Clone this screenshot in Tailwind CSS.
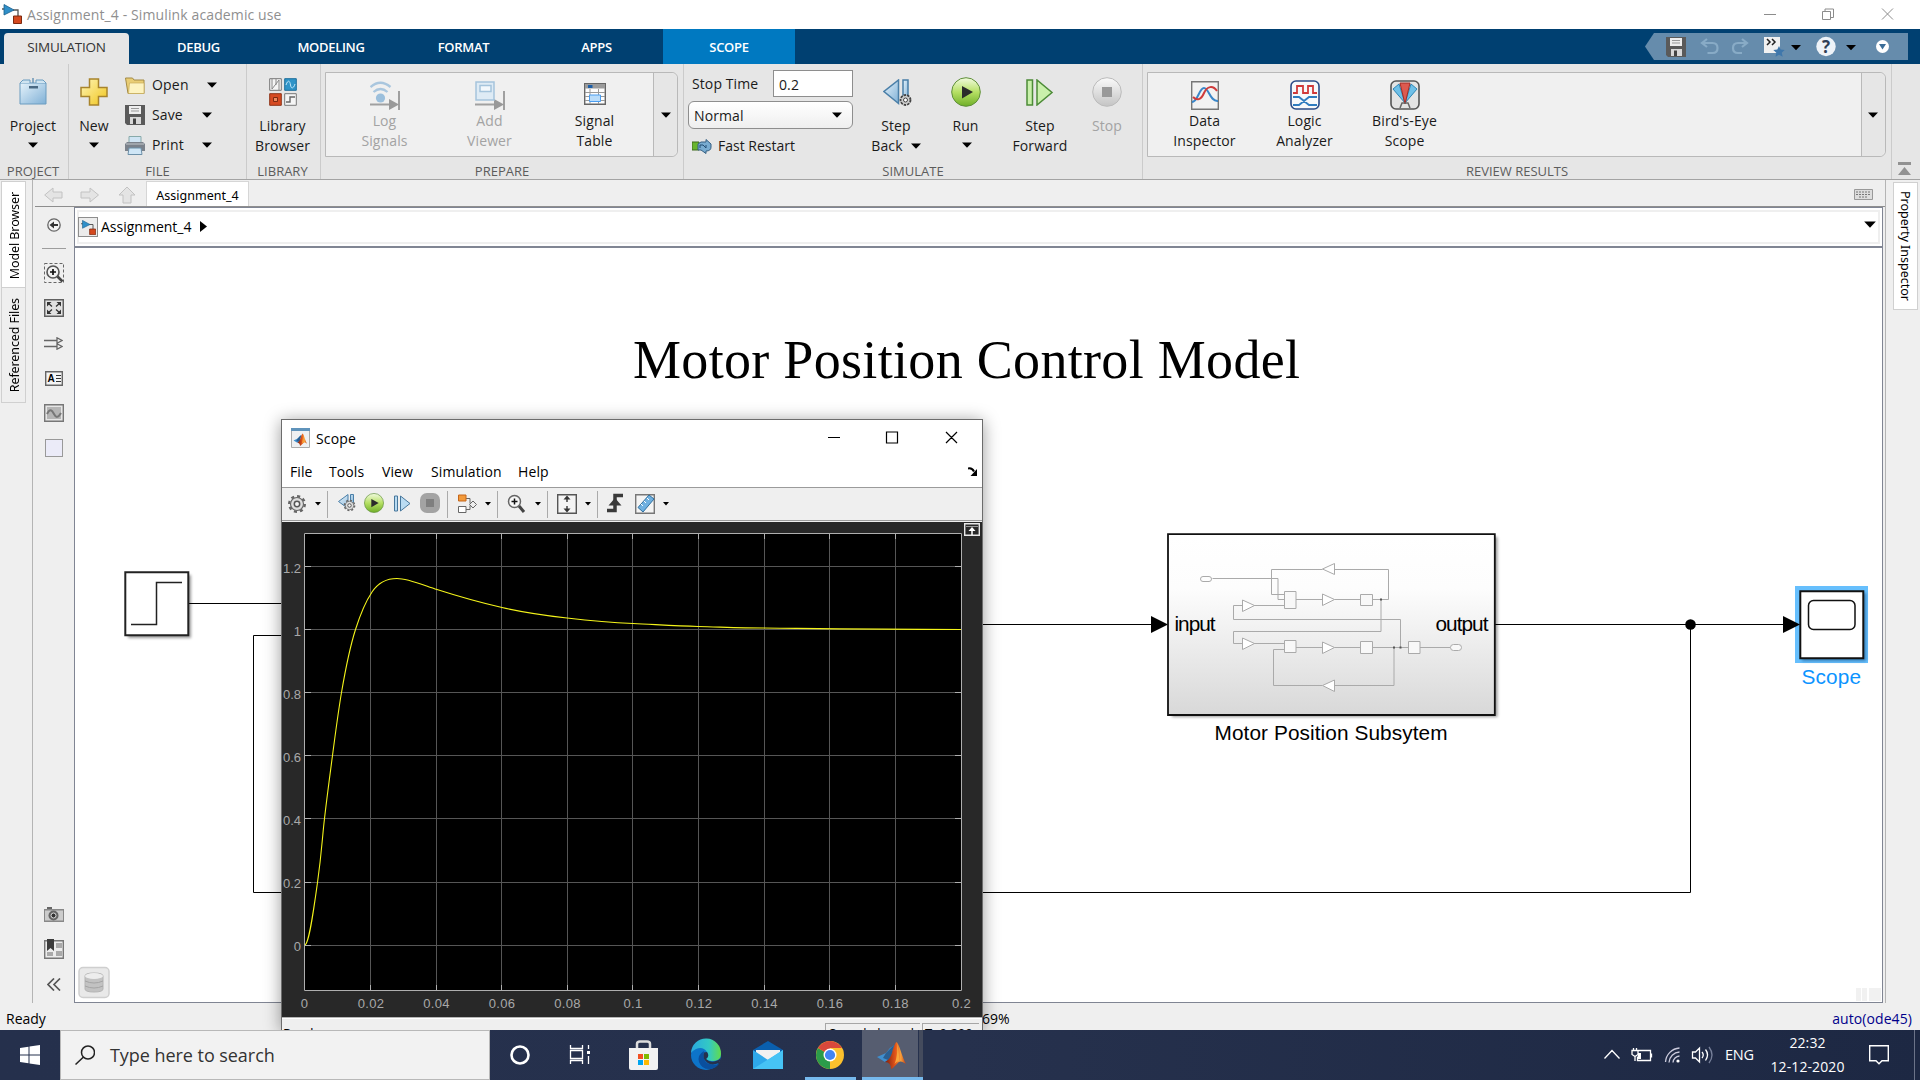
<!DOCTYPE html>
<html lang="en">
<head>
<meta charset="utf-8">
<title>Assignment_4 - Simulink academic use</title>
<script src="https://cdn.jsdelivr.net/npm/@tailwindcss/browser@4"></script>
</head>
<body class="w-[1920px] h-[1080px] overflow-hidden bg-[#efefef] font-['Open_Sans','Noto_Sans',sans-serif] text-[14px] leading-5 text-[#1a1a1a] whitespace-nowrap">
<svg class="absolute w-0 h-0" aria-hidden="true">
  <defs>
    <linearGradient id="gBlue" x1="0" y1="0" x2="1" y2="1"><stop offset="0" stop-color="#e6f3fb"/><stop offset="1" stop-color="#7fb0d6"/></linearGradient>
    <linearGradient id="gYellow" x1="0" y1="0" x2="1" y2="1"><stop offset="0" stop-color="#fff6b8"/><stop offset="1" stop-color="#f0c419"/></linearGradient>
    <linearGradient id="gGreen" x1="0" y1="0" x2="0" y2="1"><stop offset="0" stop-color="#f2fbe0"/><stop offset=".5" stop-color="#b6e064"/><stop offset="1" stop-color="#6fae28"/></linearGradient>
    <linearGradient id="gGray" x1="0" y1="0" x2="0" y2="1"><stop offset="0" stop-color="#fafafa"/><stop offset="1" stop-color="#c4c4c4"/></linearGradient>
    <linearGradient id="gSub" x1="0" y1="0" x2="0" y2="1"><stop offset="0" stop-color="#fff"/><stop offset=".3" stop-color="#fdfdfd"/><stop offset="1" stop-color="#d8d8d8"/></linearGradient>
    <linearGradient id="gFlame" x1="0" y1="0" x2="1" y2="0"><stop offset="0" stop-color="#7a1f10"/><stop offset=".5" stop-color="#e2551a"/><stop offset=".75" stop-color="#f9a13a"/><stop offset="1" stop-color="#c03a15"/></linearGradient>
    <linearGradient id="gEdge" x1="0" y1="0" x2="1" y2="0"><stop offset="0" stop-color="#29a9e0"/><stop offset=".6" stop-color="#33c9c4"/><stop offset="1" stop-color="#62dc4c"/></linearGradient>
    <filter id="soft" x="-10%" y="-10%" width="120%" height="120%"><feGaussianBlur stdDeviation="1.500"/></filter>
  </defs>
  <symbol id="dd" viewBox="0 0 10 6"><path d="M0 .5h10L5 5.8z"/></symbol>
  <symbol id="slk" viewBox="0 0 20 20"><path d="M0 5h3M11 6h5v6" fill="none" stroke="#555" stroke-width="1.300"/><path d="M2 .5 12 6 2 11z" fill="#2f8fc9" stroke="#1b5f8c" stroke-width=".8"/><path d="M11.500 12h8v7.500h-8z" fill="#d5491f" stroke="#7d2a10"/></symbol>
  <symbol id="floppy" viewBox="0 0 20 20"><path d="M0 0h20v20H2l-2-2z" fill="#5a5a5a"/><path d="M4 1h12v8H4z" fill="#eee"/><path d="M6 3.500h8M6 6h8" stroke="#999"/><path d="M5 12h11v7H5z" fill="#d8d8d8"/><path d="M8 13.500h3V19H8z" fill="#444"/></symbol>
  <symbol id="run" viewBox="0 0 30 30"><circle cx="15" cy="15" r="14.300" fill="url(#gGreen)" stroke="#5f8f3a"/><path d="M11 9l11 6-11 6.500z" fill="#2b2b2b"/></symbol>
  <symbol id="cog" viewBox="0 0 20 20"><circle cx="10" cy="10" r="7.800" fill="none" stroke="#666" stroke-width="2.400" stroke-dasharray="3.100 3"/><circle cx="10" cy="10" r="6.500" fill="#ddd" stroke="#666" stroke-width="1.200"/><circle cx="10" cy="10" r="2.700" fill="#f5f5f5" stroke="#555" stroke-width="1.500"/></symbol>
  <symbol id="stepback" viewBox="0 0 29 27"><path d="M15.500 1v23.500L1 12.500z" fill="url(#gBlue)" stroke="#4a7fa8" stroke-width="1.500"/><path d="M20 1h5v22h-5z" fill="url(#gBlue)" stroke="#4a7fa8" stroke-width="1.500"/><circle cx="22.500" cy="21" r="5" fill="#ccc" stroke="#444" stroke-width="1.800" stroke-dasharray="2.500 1"/><circle cx="22.500" cy="21" r="2" fill="#fff" stroke="#444"/></symbol>
  <symbol id="matlab" viewBox="0 0 30 28"><path d="M0 16 9 12l4-5c2-1 3-2 4-3l-4 13-5 4z" fill="#3f8fcf"/><path d="M9 12l5-5 3-3-3 12-3 3-5-2z" fill="#2a5f92"/><path d="M8 21c2-1 5-3 7-9 1-4 3-10 4.500-11C22 2 25 16 29 23c-3-2-5-3-7-2s-5 6-8 7c0-4-2-7-6-7z" fill="url(#gFlame)"/><path d="M19.500 1c1.500 5 1 15-2 22 2-2 3-3 5-2C22 12 21 5 19.500 1z" fill="#f8a63c"/></symbol>
  <symbol id="sink" viewBox="0 0 30 29"><path d="M0 23.500h20M29 10v19" stroke="#a0a0a0" stroke-width="2" fill="none"/><path d="M19 18v11l10-5.500z" fill="#999"/></symbol>
</svg>

<div class="flex flex-col w-[1920px] h-[1080px]">
  <!-- window title -->
  <header class="flex h-[29px] shrink-0 items-center bg-white text-[#8f8f8f]">
    <svg class="ml-[2px] mb-[1px] size-5"><use href="#slk"/></svg>
    <span class="ml-[5px] tracking-[0.12px]">Assignment_4 - Simulink academic use</span>
    <svg class="ml-auto mr-[26px] mb-[1px] w-[130px] h-3" viewBox="0 0 130 12" fill="none" stroke="#8c8c8c"><path d="M0 6.500h12M58.500 3.500h8v8h-8zM61 3V1h8.500v8.500H67M118 .5l11 11M129 .5l-11 11"/></svg>
  </header>

  <!-- ribbon tabs -->
  <nav class="flex h-[35px] shrink-0 bg-[#004071] text-white text-[13.500px]">
    <div class="ml-1 mt-1 w-[125px] rounded-t-sm bg-[#e6e6e6] text-center leading-[29px] text-[#333] tracking-[-0.2px]">SIMULATION</div>
    <div class="ml-[3px] w-[133px] text-center leading-9 text-[13px] font-semibold tracking-[-0.3px]">DEBUG</div>
    <div class="w-[132px] text-center leading-9 text-[13px] font-semibold tracking-[-0.3px]">MODELING</div>
    <div class="w-[133px] text-center leading-9 text-[13px] font-semibold tracking-[-0.3px]">FORMAT</div>
    <div class="w-[133px] text-center leading-9 text-[13px] font-semibold tracking-[-0.3px]">APPS</div>
    <div class="w-[132px] bg-[#0079c1] text-center leading-9 text-[13px] font-semibold tracking-[-0.3px]">SCOPE</div>
    <svg class="ml-auto mr-3 mt-1 w-[263px] h-[27px]" viewBox="1645 33 263 27">
      <path d="M1654 33h254v27h-254l-9-13.500z" fill="#668cac"/>
      <svg x="1666" y="37" width="20" height="20"><use href="#floppy"/></svg>
      <path d="M1707 39l-5 4 5 4M1702.500 43h10q5 0 5 5t-5 5h-5" fill="none" stroke="#88abc6" stroke-width="2.200"/>
      <path d="M1742 39l5 4-5 4M1747 43h-9q-5 0-5 5t5 5h4" fill="none" stroke="#88abc6" stroke-width="2.200"/>
      <path d="M1764 37h16v16h-16z" fill="#f1f1f1"/><path d="M1767 39l3 3-3 3M1772 39l3 3-3 3" fill="none" stroke="#222" stroke-width="1.500"/><path d="m1779 46 1.700 3.600 4 .4-3 2.700 1 4-3.700-2-3.500 2 .8-4-3-2.700 4-.4z" fill="#3f77ab"/>
      <svg x="1791" y="44.500" width="10" height="6"><use href="#dd"/></svg>
      <circle cx="1826" cy="46.500" r="9.700" fill="#eef3f8"/><text x="1826" y="52.500" text-anchor="middle" font-size="17" font-weight="700" fill="#2f3f55">?</text>
      <svg x="1846" y="44.500" width="10" height="6"><use href="#dd"/></svg>
      <circle cx="1882.500" cy="46.500" r="6.500" fill="#fff"/><path d="M1879 44h7l-3.500 5.500z" fill="#3b6d98"/>
    </svg>
  </nav>

  <!-- toolstrip -->
  <section class="flex h-[116px] shrink-0 border-b border-[#a3a3a3] bg-[#e6e6e6] tracking-[0.1px]">
    <div class="flex w-[69px] flex-col items-center border-r border-[#cbcbcb] pr-[2px]">
      <svg class="mt-[14px] w-7 h-[27px] shrink-0" viewBox="0 0 28 27"><path d="M1 5h26v21H1z" fill="url(#gBlue)" stroke="#6a9cc0"/><path d="M1 5l3-3h7v3M27 5l-3-3h-7v3" fill="#cfe4f1" stroke="#6a9cc0"/><path d="M14 0v5" stroke="#6a94b4" stroke-width="1.500"/><path d="M10 8h9v2.500h-9z" fill="#4a6a84"/></svg>
      <span class="mt-[11px]">Project</span>
      <svg class="mt-[6px] w-[10px] h-[6px]"><use href="#dd"/></svg>
      <span class="mt-auto text-[13px] tracking-[0.05px] leading-[16px] text-[#5c5c5c]">PROJECT</span>
    </div>
    <div class="flex w-[178px] flex-col border-r border-[#cbcbcb]">
      <div class="flex h-[97px]">
        <div class="ml-[6px] flex w-[38px] flex-col items-center">
          <svg class="mt-[14px] size-7 shrink-0" viewBox="0 0 28 28"><path d="M9.500 1h9v8.500H27v9h-8.500V27h-9v-8.500H1v-9h8.500z" fill="url(#gYellow)" stroke="#a8842c" stroke-width="1.500"/></svg>
          <span class="mt-[10px]">New</span>
          <svg class="mt-[6px] w-[10px] h-[6px]"><use href="#dd"/></svg>
        </div>
        <div class="ml-3 flex flex-col pt-[6px]">
          <div class="flex h-[30px] items-center">
            <svg class="w-5 h-[17px]" viewBox="0 0 20 17"><path d="M.5 1h7l1.500 2h10v13.500H3z" fill="#e9cd74" stroke="#a38a45"/><path d="M4.500 6h14.500v10.500H3.500z" fill="#fdf3c0" stroke="#c9ad5b" stroke-width=".7"/></svg>
            <span class="ml-[7px] w-[55px] tracking-[0.2px]">Open</span><svg class="w-[10px] h-[6px]"><use href="#dd"/></svg>
          </div>
          <div class="flex h-[30px] items-center">
            <svg class="size-5"><use href="#floppy"/></svg>
            <span class="ml-[7px] w-[50px]">Save</span><svg class="w-[10px] h-[6px]"><use href="#dd"/></svg>
          </div>
          <div class="flex h-[30px] items-center">
            <svg class="w-5 h-[19px]" viewBox="0 0 20 19"><path d="M4 .5h12V8H4z" fill="#cfe4f3" stroke="#8aa"/><path d="M2 6h16l2 2v7H0V8z" fill="#7b828b"/><path d="M1 8h18" stroke="#c4c8cc"/><path d="M4 12h12l1 6.500H3z" fill="#cfe6f6" stroke="#6d90a8"/></svg>
            <span class="ml-[7px] w-[50px]">Print</span><svg class="w-[10px] h-[6px]"><use href="#dd"/></svg>
          </div>
        </div>
      </div>
      <span class="mt-auto text-center text-[13px] tracking-normal leading-[16px] text-[#5c5c5c]">FILE</span>
    </div>
    <div class="flex w-[74px] flex-col items-center border-r border-[#cbcbcb] pr-[2px] text-center">
      <svg class="mt-[14px] size-7 shrink-0" viewBox="0 0 28 28"><path d="M.7.700h11.600v11.600H.7z" fill="#f5f5f5" stroke="#777"/><path d="M3 1v10l7-9v10M7 1v6" fill="none" stroke="#888"/><path d="M15.700.700h11.600v11.600H15.700z" fill="#2f94c8" stroke="#1f6f9c"/><path d="M17 7c2-6 4-4 4.500 0s3 4 4.500-1" fill="none" stroke="#bfe5f7"/><path d="M.7 15.700h11.600v11.600H.7z" fill="#d64a22" stroke="#8e3318"/><path d="M4.500 19.500h4v4h-4z" fill="#f08a60" stroke="#7c2a12"/><path d="M15.700 15.700h11.600v11.600H15.700z" fill="#f5f5f5" stroke="#777"/><path d="M17 24h4v-5h5" fill="none" stroke="#666" stroke-width="1.400"/></svg>
      <span class="mt-[10px]">Library<br>Browser</span>
      <span class="mt-auto text-[13px] tracking-normal leading-[16px] text-[#5c5c5c]">LIBRARY</span>
    </div>
    <div class="flex w-[363px] flex-col border-r border-[#cbcbcb]">
      <div class="ml-1 mt-2 flex h-[85px] w-[353px] rounded-r-md border border-[#b9b9b9] bg-[#f0f0f0] text-center">
        <div class="ml-[6px] flex w-[105px] flex-col items-center text-[#a3a3a3]">
          <svg class="mt-2 w-[30px] h-[29px]" viewBox="0 0 30 29"><use href="#sink"/><circle cx="10.500" cy="17" r="4.600" fill="#9bbfdc"/><path d="M3.500 11q7-6 14 0M.5 6q10-8.500 20 0" fill="none" stroke="#a9c6de" stroke-width="2.300"/></svg>
          <span class="mt-[1px]">Log<br>Signals</span>
        </div>
        <div class="flex w-[105px] flex-col items-center text-[#a3a3a3]">
          <svg class="mt-2 w-[30px] h-[29px]" viewBox="0 0 30 29"><use href="#sink"/><path d="M1 1h18v18H1z" fill="#deebf5" stroke="#a5c4dc" stroke-width="1.500"/><path d="M5 4.500h11v6H5z" fill="#f3f8fc" stroke="#a5c4dc" stroke-width="1.500"/></svg>
          <span class="mt-[1px]">Add<br>Viewer</span>
        </div>
        <div class="flex w-[105px] flex-col items-center">
          <svg class="mt-[10px] ml-[1px] w-[22px] h-[22px]" viewBox="0 0 22 22"><path d="M.700.700h20.600v20.600H.700z" fill="#fdfdfd" stroke="#666" stroke-width="1.400"/><path d="M1 1h20v4.500H1z" fill="#9b9b9b"/><path d="M4 2h4.500v3H4z" fill="#1d5fa8"/><path d="M1 9.500h20M1 13.500h20M1 17.500h20M6 6v15M14.500 6v15" stroke="#999"/><path d="M5.500 12h11v6.500h-11z" fill="#b9dcfa" stroke="#4a9df0"/></svg>
          <span class="mt-[6px]">Signal<br>Table</span>
        </div>
        <div class="ml-auto flex w-6 items-center justify-center rounded-r-md border-l border-[#b9b9b9] bg-[#e6e6e6]"><svg class="w-[10px] h-[6px]"><use href="#dd"/></svg></div>
      </div>
      <span class="mt-auto text-center text-[13px] tracking-normal leading-[16px] text-[#5c5c5c]">PREPARE</span>
    </div>
    <div class="flex w-[459px] flex-col border-r border-[#cbcbcb]">
      <div class="flex h-[97px] text-center">
        <div class="ml-1 w-[165px] pt-[6px]">
          <div class="flex items-center justify-between"><span class="ml-1">Stop Time</span><span class="h-[27px] w-20 border border-[#8e8e8e] bg-white pl-[5px] text-left leading-[27px]">0.2</span></div>
          <div class="mt-1 flex h-7 items-center justify-between rounded-md border border-[#8e8e8e] bg-linear-to-b from-white to-[#efefef] pl-[5px] pr-[10px]"><span class="mt-px">Normal</span><svg class="w-[10px] h-[6px]"><use href="#dd"/></svg></div>
          <div class="mt-[7px] flex items-center"><svg class="ml-1 w-5 h-[15px]" viewBox="0 0 20 15"><path d="M0 3h7v8H0z" fill="#69b52e" stroke="#3f6a1d"/><path d="M9 3h5V.5l5 4.500v3q0 4-5 4v2.500L9 11H6V5z" fill="#78acd1" stroke="#355f82"/><path d="M8 9V6h3l3 3V6" fill="none" stroke="#234e74"/></svg><span class="ml-[6px] tracking-normal">Fast Restart</span></div>
        </div>
        <div class="ml-[10px] flex w-[66px] flex-col items-center">
          <svg class="mt-[15px] ml-[2px] w-[29px] h-[27px] shrink-0"><use href="#stepback"/></svg>
          <span class="mt-[10px]">Step</span>
          <span class="flex items-center gap-2">Back <svg class="w-[10px] h-[6px]"><use href="#dd"/></svg></span>
        </div>
        <div class="ml-[4px] flex w-[65px] flex-col items-center">
          <svg class="mt-[13px] size-[30px] shrink-0"><use href="#run"/></svg>
          <span class="mt-[9px]">Run</span>
          <svg class="mt-[6px] ml-[2px] w-[10px] h-[6px]"><use href="#dd"/></svg>
        </div>
        <div class="ml-[9px] flex w-[66px] flex-col items-center">
          <svg class="mt-[15px] w-7 h-[27px] shrink-0" viewBox="0 0 28 27"><path d="M1 1h5.500v25H1z" fill="#c9f0ab" stroke="#4c8b37" stroke-width="1.500"/><path d="M11 1v25l15-12.500z" fill="#c9f0ab" stroke="#4c8b37" stroke-width="1.500"/></svg>
          <span class="mt-[10px]">Step<br>Forward</span>
        </div>
        <div class="ml-[1px] flex w-[66px] flex-col items-center text-[#a3a3a3]">
          <svg class="mt-[13px] size-[30px] shrink-0" viewBox="0 0 30 30"><circle cx="15" cy="15" r="14.300" fill="url(#gGray)" stroke="#bbb"/><path d="M10 10h10v10H10z" fill="#999"/></svg>
          <span class="mt-[9px]">Stop</span>
        </div>
      </div>
      <span class="mt-auto text-center text-[13px] tracking-normal leading-[16px] text-[#5c5c5c]">SIMULATE</span>
    </div>
    <div class="flex w-[749px] flex-col border-r border-[#cbcbcb]">
      <div class="ml-1 mt-2 flex h-[85px] w-[739px] rounded-r-md border border-[#b9b9b9] bg-[#f0f0f0] text-center">
        <div class="ml-[6px] flex w-[101px] flex-col items-center">
          <svg class="mt-2 w-7 h-[29px]" viewBox="0 0 28 29"><path d="M.7.700h26.600v27.600H.7z" fill="#f2f2f2" stroke="#777" stroke-width="1.400"/><path d="M1 21C7 21 8 7 13 7s6 14 14 13" fill="none" stroke="#3a86c8" stroke-width="2"/><path d="M2 16c4 4 8 3 11-4s9-8 13-2" fill="none" stroke="#cf3b3b" stroke-width="2"/></svg>
          <span class="mt-[1px]">Data<br>Inspector</span>
        </div>
        <div class="flex w-[99px] flex-col items-center">
          <svg class="mt-[7px] size-[30px]" viewBox="0 0 30 30"><rect x="1" y="1" width="28" height="28" rx="5" fill="#f7f9fb" stroke="#2a4b87" stroke-width="1.600"/><path d="M3 13h4V6h6v7h5V6h5v7h4" fill="none" stroke="#d13a3a" stroke-width="1.800"/><path d="M3 17h6l10 8h8M3 25h6l10-8h8" fill="none" stroke="#2f7cc0" stroke-width="1.800"/></svg>
          <span class="mt-[1px]">Logic<br>Analyzer</span>
        </div>
        <div class="flex w-[101px] flex-col items-center">
          <svg class="mt-[7px] size-[30px]" viewBox="0 0 30 30"><rect x="1" y="1" width="28" height="28" rx="5" fill="#e4e4e4" stroke="#555" stroke-width="1.600"/><path d="M3 9l6-5 6 19zM27 9l-6-5-6 19z" fill="#6fc0e8" stroke="#2f86b5"/><path d="M10 3h10l-5 21z" fill="#dd5a50" stroke="#a42a25"/><path d="M10 28l2-5h6l2 5" fill="none" stroke="#666" stroke-width="1.500"/></svg>
          <span class="mt-[1px]">Bird's-Eye<br>Scope</span>
        </div>
        <div class="ml-auto flex w-6 items-center justify-center rounded-r-md border-l border-[#b9b9b9] bg-[#e6e6e6] pr-[1px]"><svg class="w-[10px] h-[6px]"><use href="#dd"/></svg></div>
      </div>
      <span class="mt-auto text-center text-[13px] tracking-normal leading-[16px] text-[#5c5c5c]">REVIEW RESULTS</span>
    </div>
    <svg class="mt-auto mb-[3px] ml-[6px] w-[13px] h-[14px]" viewBox="0 0 13 14"><path d="M0 0h13v3H0zM6.500 5 13 13H0z" fill="#929292"/></svg>
  </section>

  <!-- workspace -->
  <main class="flex h-[823px] shrink-0">
    <aside class="flex w-[33px] flex-col border-r border-[#b4b4b4] pl-[1px] pt-[1px] font-['Noto_Sans'] text-[12.500px] text-black">
      <div class="flex h-[107px] w-[25px] items-center justify-center border border-[#d0d0d0] bg-white pt-[2px] pl-[2px]"><span class="rotate-180 tracking-[-0.1px] [writing-mode:vertical-rl]">Model Browser</span></div>
      <div class="-mt-px flex h-[116px] w-[25px] items-center justify-center border border-[#d0d0d0] pt-[1px] pl-[2px]"><span class="rotate-180 tracking-[-0.1px] [writing-mode:vertical-rl]">Referenced Files</span></div>
    </aside>
    <div class="flex w-[1852px] flex-col">
      <div class="ml-[2px] flex h-[27px] shrink-0 items-end border-b border-[#8e8e8e]">
        <svg class="mb-[2px] ml-[9px] w-[92px] h-[18px]" viewBox="0 0 92 18" fill="#e4e4e4" stroke="#c2c2c2"><path d="M.7 9 9 2v4h9v6H9v4zM54.500 9 46 2v4h-9v6h9v4zM83 1l8 8h-4v8h-8V9h-4z"/></svg>
        <div class="ml-[10px] h-[25px] w-[103px] border border-b-0 border-[#d6d6d6] bg-white pt-px text-center font-['Noto_Sans'] text-[12.500px] leading-[26px] text-black">Assignment_4</div>
        <svg class="mb-[6px] ml-auto mr-[12px] w-[19px] h-[11px]" viewBox="0 0 19 11"><path d="M.5.500h18v10H.5z" fill="#ddd" stroke="#999"/><path d="M2 3h15M2 5.500h15M5 8h9" stroke="#777" stroke-dasharray="2 1"/></svg>
      </div>
      <div class="flex h-[796px] shrink-0">
        <!-- palette -->
        <div class="flex w-[41px] flex-col items-center pt-[11px]">
          <svg class="w-[14px] h-[14px] shrink-0" viewBox="0 0 14 14"><circle cx="7" cy="7" r="6.200" fill="#f4f4f4" stroke="#666" stroke-width="1.300"/><path d="M2.500 7 7 3.500V6h4v2H7v2.500z" fill="#333"/></svg>
          <div class="mt-[16px] h-[1px] w-6 shrink-0 bg-[#9d9d9d]"></div>
          <svg class="mt-[14px] size-5 shrink-0" viewBox="0 0 20 20"><path d="M.5.500h19v19H.5z" fill="none" stroke="#666" stroke-dasharray="3 2"/><circle cx="9" cy="9" r="6" fill="#f2f2f2" stroke="#555" stroke-width="1.600"/><path d="M9 6v6M6 9h6" stroke="#111" stroke-width="1.700"/><path d="m13.500 13.500 5 5" stroke="#444" stroke-width="2.600"/></svg>
          <svg class="mt-4 w-5 h-[18px] shrink-0" viewBox="0 0 20 18"><path d="M.7.700h18.600v16.600H.7z" fill="#e2e2e2" stroke="#606060" stroke-width="1.500"/><path d="m3 3h4.500L3 7.500zM17 3v4.500L12.500 3zM3 15v-4.500L7.500 15zM17 15h-4.500L17 10.500z" fill="#333"/><path d="m4 4 4 3.500M16 4l-4 3.500M4 14l4-3.500M16 14l-4-3.500" stroke="#333" stroke-width="1.300"/></svg>
          <svg class="mt-[20px] w-[19px] h-[13px] shrink-0" viewBox="0 0 19 13" fill="none" stroke="#666" stroke-width="1.300"><path d="M0 3.500h13M0 9.500h13M13 .800l5 2.700-5 2.700zM13 6.800l5 2.700-5 2.700z"/></svg>
          <svg class="mt-[21px] w-[18px] h-[15px] shrink-0" viewBox="0 0 18 15"><path d="M.7.700h16.600v13.600H.7z" fill="#f4f4f4" stroke="#666" stroke-width="1.400"/><text x="2.500" y="11" font-size="10" font-weight="700" font-family="Liberation Sans">A</text><path d="M11 4.500h5M11 7.500h5M11 10.500h5" stroke="#333"/></svg>
          <svg class="mt-[18px] w-5 h-[18px] shrink-0" viewBox="0 0 20 18"><path d="M.7.700h18.600v16.600H.7z" fill="#e6e6e6" stroke="#777" stroke-width="1.400"/><path d="M3 3h14v12H3z" fill="#b5b5b5"/><path d="M3 10c3-6 5-4 7 0s4 4 7-1" fill="none" stroke="#777" stroke-width="2"/></svg>
          <div class="mt-[17px] h-[18px] w-[18px] shrink-0 border-[1.500px] border-[#999] bg-[#ebebf8]"></div>
          <svg class="mt-auto w-5 h-[15px] shrink-0" viewBox="0 0 20 15"><path d="M0 2h20v13H0z" fill="#888"/><path d="M3 0h5v2H3z" fill="#666"/><path d="M1 3.500h18v10H1z" fill="#ccc"/><circle cx="9.500" cy="8.500" r="5" fill="#666"/><circle cx="9.500" cy="8.500" r="2.500" fill="#333" stroke="#ddd"/></svg>
          <svg class="mt-[17px] w-5 h-5 shrink-0" viewBox="0 0 20 20"><path d="M.7 1.700h18.600v17.600H.7z" fill="#ececec" stroke="#777" stroke-width="1.400"/><path d="M12 4h6v5h-6zM12 12h6v5h-6zM3 13h6v4H3z" fill="#aaa"/><path d="M3 0h7v12L6.500 9 3 12z" fill="#3c3c3c"/></svg>
          <svg class="mt-[19px] mb-[12px] w-[14px] h-[13px] shrink-0" viewBox="0 0 14 13" fill="none" stroke="#555" stroke-width="1.700"><path d="M7 .5l-6 6 6 6M13 .5l-6 6 6 6"/></svg>
        </div>
        <div class="flex w-[1809px] flex-col border border-[#808593] bg-white">
          <div class="flex h-[40px] shrink-0 items-center border-b-2 border-[#808593] px-[2px] text-black">
            <div class="flex h-[34px] w-full items-center border-2 border-[#efefef]">
              <span class="-ml-px flex size-5 items-center justify-center border border-[#8d8d8d] bg-[#ececec]"><svg class="size-[15px]"><use href="#slk"/></svg></span>
              <span class="ml-[3px] w-[99px]">Assignment_4</span>
              <svg class="mb-[2px] w-[7px] h-[11px]"><path d="M0 0l7 5.500L0 11z"/></svg>
              <svg class="mb-[5px] ml-auto mr-[2px] w-3 h-[7px]"><use href="#dd"/></svg>
            </div>
          </div>
          <!-- block diagram -->
          <svg class="w-[1807px] h-[754px] shrink-0" viewBox="75 248 1807 754" font-family="Liberation Sans, Arial, sans-serif" font-size="20.800">
            <text x="633" y="378" textLength="667" font-family="Liberation Serif, serif" font-size="54">Motor Position Control Model</text>
            <g fill="#000" opacity=".4" filter="url(#soft)"><path d="M128 575h63v63h-63zM1172 537h325.500v180h-325.500z"/></g>
            <path d="M189 603.500h100M900 635.500" fill="none" stroke="#000"/>
            <path d="M290 635.500H253.500v257h1437V624.500M980 624.500h180M1495 624.500h295" fill="none" stroke="#000"/>
            <path d="M125.300 572.300h63v63h-63z" fill="#fff" stroke="#222" stroke-width="2"/>
            <path d="M131 624.500h25.500v-42H182" fill="none" stroke="#222" stroke-width="1.500"/>
            <path d="M1151 616v17l17-8.500z"/>
            <path d="M1168 534.200h326.800v180.800H1168z" fill="url(#gSub)" stroke="#111" stroke-width="1.800"/>
            <g fill="none" stroke="#aaa">
              <rect x="1200.500" y="576.500" width="11" height="5" rx="2.500"/>
              <path d="M1212.500 578.500h65.500v21h6.500M1284.500 594.500h-13v-25h51M1335 569.500h53.500v30h-16M1296 599.500h26.500M1334.500 599.500h26M1242.500 605.500h-9v14h167v28M1254 605.500h30M1381 600v31.500h-147.500v12h9M1254 643.500h30M1296 647.500h26.500M1334.500 647.500h26M1372.500 647.500h36M1420 647.500h30M1394 648v37.500h-59M1322 685.500h-48.500v-36h11"/>
              <path d="M1334.500 563.500v11l-12-5.500zM1322.500 594v11.500l12-6zM1242.500 600v11.500l12-6zM1242.500 638v11.500l12-6zM1322.500 642v11.500l12-6zM1334.500 680v11.500l-12-6z" fill="#fff"/>
              <path d="M1284.500 591.500h11.500v17h-11.500zM1360.500 594.500h12v11h-12zM1284.500 640.500h11.500v12h-11.500zM1360.500 641.500h12v12h-12zM1408.500 641.500h11.500v12h-11.500z" fill="#f8f8f8"/>
              <rect x="1450.500" y="644.500" width="11" height="6" rx="3" fill="#f8f8f8"/>
            </g>
            <path d="M1380 598.500h2v2h-2zM1393 646.500h2v2h-2zM1399.500 646.500h2v2h-2z" fill="#555"/>
            <text x="1174.500" y="631" textLength="41">input</text>
            <text x="1435.500" y="631" textLength="53">output</text>
            <text x="1214.500" y="740" textLength="233">Motor Position Subsytem</text>
            <circle cx="1690.500" cy="624.500" r="5.300"/>
            <path d="M1795 586h73v77h-73z" fill="#66bffd"/>
            <path d="M1802 593h64v68h-64z" fill="#3a82bb" filter="url(#soft)"/>
            <path d="M1800.300 591.300h63v67h-63z" fill="#fff" stroke="#111" stroke-width="2"/>
            <rect x="1808.500" y="600.500" width="46.500" height="29" rx="5" fill="#fff" stroke="#111" stroke-width="1.500"/>
            <path d="M1783 616v17l17-8.500z"/>
            <text x="1801.500" y="684" textLength="59.500" fill="#0c94ff">Scope</text>
            <rect x="79" y="967.500" width="30" height="30" rx="4" fill="#e9e9e9" stroke="#cfcfcf" stroke-width="1.500"/>
            <path d="M85 976q0-3 9-3t9 3v13q0 3-9 3t-9-3z" fill="#c2c2c2" stroke="#b4b4b4"/><ellipse cx="94" cy="976" rx="9" ry="3" fill="#ededed"/><path d="M85 981q9 4 18 0M85 986q9 4 18 0" fill="none" stroke="#a4a4a4"/>
            <path d="M1856 988h5v13h-5zM1862 988h5v13h-5zM1869 988h12v13h-12z" fill="#f1f1f1"/>
          </svg>
        </div>
      </div>
    </div>
    <aside class="flex w-[35px] flex-col border-l border-[#b4b4b4] pl-[7px] pt-[2px]">
      <div class="flex h-[128px] w-[25px] items-center justify-center border border-[#d0d0d0] bg-white pr-[2px] font-['Noto_Sans'] text-[12.500px] text-black"><span class="[writing-mode:vertical-rl]">Property Inspector</span></div>
    </aside>
  </main>

  <footer class="flex h-[27px] shrink-0 items-center text-black">
    <span class="ml-[6px] mt-1 w-[976px]">Ready</span><span class="mt-1">69%</span><span class="ml-auto mr-2 mt-1 tracking-[0.08px] text-[#00008b]">auto(ode45)</span>
  </footer>

  <!-- taskbar -->
  <div class="flex h-[50px] shrink-0 items-center bg-linear-to-r from-[#25304c] via-[#26314d] to-[#1d2843] text-white">
    <div class="flex w-[60px] justify-center"><svg class="size-5" viewBox="0 0 20 20" fill="#fff"><path d="M0 3l8.500-1.200v7.700H0zM9.500 1.600 20 0v9.500H9.500zM0 10.500h8.500v7.700L0 17zM9.500 10.500H20V20L9.500 18.400z"/></svg></div>
    <div class="flex h-full w-[430px] items-center border border-[#b8b8b8] bg-[#f2f2f2] text-[#333]">
      <svg class="ml-[14px] size-5" viewBox="0 0 20 20" fill="none" stroke="#222" stroke-width="1.500"><circle cx="13" cy="7.500" r="6.500"/><path d="M8.500 12 .5 19.500"/></svg>
      <span class="ml-[15px] text-[18px] tracking-[-0.05px]">Type here to search</span>
    </div>
    <svg class="w-[440px] h-[50px]" viewBox="490 1030 440 50">
      <circle cx="520" cy="1055" r="8.500" fill="none" stroke="#fff" stroke-width="2.600"/>
      <path d="M570.500 1045v3.500h12V1045M570.500 1064v-3.500h12v3.500M570.500 1050.500h12v8h-12zM588.500 1045v4M588.500 1056v8" fill="none" stroke="#fff" stroke-width="1.300"/><path d="M587 1051h3v3h-3z" fill="#fff"/>
      <path d="M637 1049v-5q0-2.500 3-2.500h7q3 0 3 2.500v5" fill="none" stroke="#ddd" stroke-width="2.500"/><path d="M629 1048h29v20q0 2-2 2h-25q-2 0-2-2z" fill="#f2f2f2"/><path d="M638 1054h5v5h-5z" fill="#f25022"/><path d="M644 1054h5v5h-5z" fill="#7fba00"/><path d="M638 1060h5v5h-5z" fill="#00a4ef"/><path d="M644 1060h5v5h-5z" fill="#ffb900"/>
      <circle cx="706" cy="1055" r="15" fill="#0d74c9"/><path d="M691 1053a15 15 0 0 1 30 1q0 6-7 7-6 0-8-2 3-3 1-7-4-6-11-3-4 2-5 4z" fill="url(#gEdge)"/><path d="M704 1051q-7 4-5 11 3 8 12 7 5-1 8-5-6 2-12-1-5-4-3-12z" fill="#0a4f9e"/><path d="M707 1052q3 4-1 7 4 4 10 2 2 0 5-3l-2 5q-7 3-12-.5-5-4-3-10z" fill="#26314d"/>
      <path d="M753 1050l15-9 15 9-15 10z" fill="#0a5fae"/><path d="M756 1050h24v12h-24z" fill="#f1f1f1"/><path d="M753 1050l15 10 15-10v19h-30z" fill="#2ea8ea"/><path d="M753 1069l30-19v19z" fill="#46c3f5"/>
      <circle cx="830" cy="1055" r="14" fill="#fbc02d"/><path d="M830 1055 830 1069A14 14 0 0 1 817.900 1048z" fill="#2b9b4a"/><path d="M817.900 1048a14 14 0 0 1 24.200 0H830v7z" fill="#d9483b"/><circle cx="830" cy="1055" r="6.500" fill="#fff"/><circle cx="830" cy="1055" r="5.100" fill="#4285f4"/>
      <path d="M862 1030h56v50h-56z" fill="#565d70"/><path d="M919 1030h4v50h-4z" fill="#444b5d"/><path d="M805 1077h51v3h-51zM862 1077h61v3h-61z" fill="#76b9ed"/>
      <svg x="877" y="1041" width="30" height="28"><use href="#matlab"/></svg>
    </svg>
    <svg class="ml-auto w-[120px] h-[50px]" viewBox="1600 1030 120 50" fill="none" stroke="#fff" stroke-width="1.300">
      <path d="M1604.500 1058.500l7.500-8 7.500 8M1638 1050.500h12.500v10h-13v-4M1651.500 1053.500v4M1632 1050.500h6v4l-3 2-3-2zM1633.500 1048v2M1636.500 1048v2M1635 1056v5"/><path d="M1638 1053h3v6h-3z" fill="#fff" stroke="none"/>
      <path d="M1665.500 1062a15 15 0 0 1 14-14M1669 1062.500a11 11 0 0 1 10.500-10.500M1673 1062.500a7 7 0 0 1 6.500-6.500" stroke="#ccd"/><circle cx="1678" cy="1061" r="1.600" fill="#fff" stroke="none"/>
      <path d="M1692.500 1052h3l4-4v14l-4-4h-3zM1702 1052q2.500 3 0 6M1705.500 1049.500q4 5 0 11"/><path d="M1709 1047q6 8 0 16" stroke="#77809a"/>
    </svg>
    <span class="ml-[5px] w-[45px] text-[14.500px] tracking-[-0.2px]">ENG</span>
    <span class="w-[75px] text-center text-[14px] leading-6 tracking-[0.1px]">22:32<br>12-12-2020</span>
    <svg class="ml-[24px] w-5 h-5" viewBox="0 0 20 20" fill="none" stroke="#fff" stroke-width="1.400"><path d="M.7.700h18.600v15H13l-3 3-3-3H.7z"/></svg>
    <div class="ml-[25px] mr-[5px] h-full w-px bg-[#6b7388]"></div>
  </div>
</div>

<!-- floating Scope window -->
<div class="absolute left-[281px] top-[419px] flex h-[611px] w-[702px] flex-col overflow-hidden border border-b-0 border-[#6c6c6c] bg-white text-black [clip-path:inset(-30px_-30px_0_-30px)] shadow-[0_2px_16px_rgba(0,0,0,0.4)]">
  <div class="flex h-[36px] shrink-0 items-center">
    <svg class="ml-[9px] w-[19px] h-5" viewBox="0 0 19 20"><path d="M.5.500h18v19H.5z" fill="#eef0f2" stroke="#aaa"/><path d="M0 0h19v3H0z" fill="#5f93bb"/><svg x="2" y="5" width="15" height="13"><use href="#matlab"/></svg></svg>
    <span class="ml-[6px] mt-px tracking-[0.15px]">Scope</span>
    <svg class="ml-auto mr-[24px] mt-[-1px] w-[130px] h-[13px]" viewBox="0 0 130 13" fill="none" stroke="#000" stroke-width="1.200"><path d="M0 6.500h12M58.500 1h11v11h-11zM118 1l11 11M129 1l-11 11"/></svg>
  </div>
  <div class="flex h-[31px] shrink-0 items-center pt-px tracking-[0.1px]">
    <span class="ml-2 w-[39px]">File</span><span class="w-[53px]">Tools</span><span class="w-[49px]">View</span><span class="w-[87px]">Simulation</span><span>Help</span>
    <svg class="ml-auto mb-[2px] mr-[5px] size-[9px]" viewBox="0 0 9 9"><path d="M0 1.500q4-1 6 3" fill="none" stroke="#000" stroke-width="2"/><path d="M9 2v7H2.500z"/></svg>
  </div>
  <svg class="w-[700px] h-[35px] shrink-0" viewBox="282 487 700 35">
    <path d="M282 487h700v35H282z" fill="#efefef"/><path d="M282 487.500h700M282 520.500h700" stroke="#9b9b9b"/><path d="M327.500 491v27M447.500 491v27M497.500 491v27M547.500 491v27M597.500 491v27" stroke="#aaa"/>
    <svg x="287" y="494" width="20" height="20"><use href="#cog"/></svg>
    <path d="M315 502h6l-3 3.500zM485 502h6l-3 3.500zM535 502h6l-3 3.500zM585 502h6l-3 3.500zM663 502h6l-3 3.500z"/>
    <path d="M348 494.500v14l-9.500-7zM350.500 494.500h3v8h-3z" fill="url(#gBlue)" stroke="#4a7fa8"/><svg x="343" y="499" width="13" height="13"><use href="#cog"/></svg>
    <svg x="364" y="493" width="20" height="20"><use href="#run"/></svg>
    <path d="M394.500 496h3v15h-3zM400.500 496v15l9.500-7.500z" fill="#b9dbf2" stroke="#47779c"/>
    <rect x="420" y="493" width="20" height="20" rx="7" fill="#a3a3a3"/><path d="M426 499h8v8h-8z" fill="#7f7f7f"/>
    <path d="M466 498.500h4v5M466 509.500h4v-4" fill="none" stroke="#666"/><path d="M458.500 495h7.500v6h-7.500z" fill="#f29a3a" stroke="#c5661b"/><path d="M458.500 506.500h7.500v6h-7.500z" fill="#fff" stroke="#666"/><path d="M473 501l3.500 3.500-3.500 3.500-3.500-3.500z" fill="#eee" stroke="#666"/>
    <circle cx="514.500" cy="501.500" r="6" fill="#f7f7f7" stroke="#666" stroke-width="1.500"/><path d="M514.500 498.500v6M511.500 501.500h6" stroke="#111" stroke-width="1.500"/><path d="m519 506 5 6" stroke="#444" stroke-width="3"/>
    <path d="M557.700 494.700h18.600v18.600h-18.600z" fill="#f4f4f4" stroke="#555" stroke-width="1.400"/><path d="M563.500 499.500l3.500-4 3.500 4zM563.500 508.500l3.500 4 3.500-4z" fill="#333"/><path d="M567 498v4M567 506v4" stroke="#333" stroke-width="1.400"/>
    <path d="M607 510.500h8v-15h8" fill="none" stroke="#3a3a3a" stroke-width="3.500"/><path d="M608.500 505.500l6.500-7.500 6.500 7.500z" fill="#3a3a3a"/>
    <path d="M635.700 494.700h18.600v18.600h-18.600z" fill="#f4f4f4" stroke="#777" stroke-width="1.400"/><path d="M638 507.500 649 495l5 4-11 13z" fill="#6fb0e0" stroke="#2f6f9f"/><path d="M641 504l2 2M644 501l2 2M647 498l2 2" stroke="#fff"/>
  </svg>
  <svg class="w-[700px] h-[495px] shrink-0" viewBox="282 522 700 495" font-family="Liberation Sans, Arial, sans-serif" font-size="13" fill="#a8a8a8">
    <path d="M282 522h700v495H282z" fill="#282828"/><path d="M304 533h658v458H304z" fill="#000"/>
    <path d="M370.500 533v457M436.500 533v457M501.500 533v457M567.500 533v457M632.500 533v457M698.500 533v457M764.500 533v457M829.500 533v457M895.500 533v457M304 566.500h657M304 629.500h657M304 692.500h657M304 755.500h657M304 818.500h657M304 882.500h657M304 945.500h657" fill="none" stroke="#565656"/>
    <path d="M370.500 533v6m0 446v5M436.500 533v6m0 446v5M501.500 533v6m0 446v5M567.500 533v6m0 446v5M632.500 533v6m0 446v5M698.500 533v6m0 446v5M764.500 533v6m0 446v5M829.500 533v6m0 446v5M895.500 533v6m0 446v5M304 566.500h7m644 0h6M304 629.500h7m644 0h6M304 692.500h7m644 0h6M304 755.500h7m644 0h6M304 818.500h7m644 0h6M304 882.500h7m644 0h6M304 945.500h7m644 0h6M304.500 533.500h657v457h-657z" fill="none" stroke="#afafaf"/>
    <path d="M305 945C309 943 313 915 317.500 882.500S322 840 324.500 818.500 329.500 778 332.500 755.500 338 713 341.500 692.500 349 650 355.500 629.500 366 601 372 592 386 578.500 397 578.500 423 585 437 589.500 478 602 502 607.500 545 615.500 567 618 611 622.500 633 623.500 676 626 698 626.500 742 628 764 628 850 629.500 961 629.500" fill="none" stroke="#f4f41a" stroke-width="1.100"/>
    <g text-anchor="end"><text x="301" y="573">1.2</text><text x="301" y="636">1</text><text x="301" y="699">0.8</text><text x="301" y="762">0.6</text><text x="301" y="825">0.4</text><text x="301" y="888">0.2</text><text x="301" y="951">0</text></g>
    <g text-anchor="middle" letter-spacing=".3"><text x="304.500" y="1008">0</text><text x="371" y="1008">0.02</text><text x="436.500" y="1008">0.04</text><text x="502" y="1008">0.06</text><text x="567.500" y="1008">0.08</text><text x="633" y="1008">0.1</text><text x="699" y="1008">0.12</text><text x="764.500" y="1008">0.14</text><text x="830" y="1008">0.16</text><text x="895.500" y="1008">0.18</text><text x="961.500" y="1008">0.2</text></g>
    <path d="M964.700 523.700h14.600v11.600h-14.600z" fill="#282828" stroke="#e8e8e8" stroke-width="1.400"/><path d="M966 526.500h12" stroke="#999"/><path d="M968.500 531l3.500-4 3.500 4z" fill="#fff"/><path d="M972 530v5" stroke="#fff" stroke-width="1.500"/>
  </svg>
  <div class="flex h-[13px] shrink-0 items-start border-t border-[#b5b5b5] bg-[#efefef] text-[13px] leading-4 shadow-[inset_0_1px_0_#fff]">
    <span class="ml-[1px] mt-[7px]">Ready</span>
    <span class="ml-auto mt-[5px] h-4 w-[95px] border-l border-t border-[#a6a6a6] pl-[3px] pt-[1px]">Sample based</span>
    <span class="ml-[2px] mr-[3px] mt-[5px] h-4 w-[57px] border-l border-t border-[#a6a6a6] pl-[2px] pt-[1px]">T=0.200</span>
  </div>
</div>
</body>
</html>
